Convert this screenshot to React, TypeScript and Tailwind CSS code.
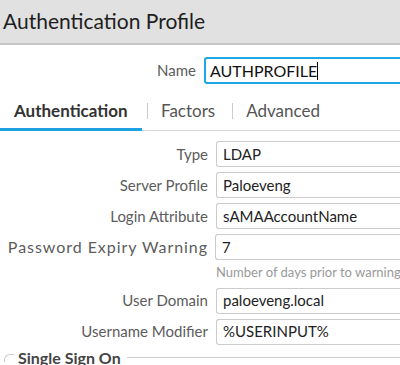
import React from "react";

const font = { fontFamily: "Lato, 'Noto Sans', sans-serif" };

function Row({
  label,
  value,
  mt = "mt-[5px]",
  wide = false,
}: {
  label: string;
  value: string;
  mt?: string;
  wide?: boolean;
}) {
  return (
    <div className={`flex items-center ${mt}`}>
      <div
        className={`w-[208px] shrink-0 whitespace-nowrap text-right text-[#5c5c5c] ${
          wide ? "text-[16px] tracking-[0.95px] mr-[-1px]" : "text-[15px]"
        }`}
      >
        {label}
      </div>
      <div className="ml-[8px] flex h-[26px] flex-1 items-center rounded-l-[3px] border border-r-0 border-[#cbcbcb] bg-white pl-[6px] text-[15px] text-[#222]">
        {value}
      </div>
    </div>
  );
}

export default function App() {
  return (
    <div style={font} className="h-[365px] w-[400px] overflow-hidden bg-white">
      <div className="flex h-[45px] items-center border-b-2 border-[#c6c6c6] bg-[#e1e1e1] pl-[3px] pb-[2px]">
        <span className="text-[21px] text-[#1e1e1e]">Authentication Profile</span>
      </div>
      <div className="mt-[12px] flex items-center">
        <div className="w-[196px] shrink-0 text-right text-[15px] text-[#5c5c5c]">Name</div>
        <div className="ml-[8px] flex h-[27px] flex-1 items-center rounded-l-[3px] border-2 border-r-0 border-[#1ea7e4] pl-[4px] text-[16px] text-[#111]">
          AUTHPROFILE<span className="inline-block h-[18px] w-[1px] bg-black" />
        </div>
      </div>
      <div className="mt-[10px] flex h-[37px] items-end border-b border-[#d9d9d9]">
        <div className="relative flex h-full w-[142px] items-center pb-[3px] pl-[14px] text-[17px] font-bold text-[#333]">
          Authentication
          <div className="absolute bottom-[-1px] left-0 h-[3px] w-[142px] bg-[#1da1e0]" />
        </div>
        <div className="flex h-full items-center pb-[3px] text-[17px] text-[#555]">
          <span className="ml-[5px] mr-[13px] h-[16px] w-[1px] bg-[#ccc]" />
          <span>Factors</span>
          <span className="ml-[17px] mr-[13px] h-[16px] w-[1px] bg-[#ccc]" />
          <span>Advanced</span>
        </div>
      </div>
      <div className="mt-[10px]">
        <Row label="Type" value="LDAP" mt="mt-0" />
        <Row label="Server Profile" value="Paloeveng" />
        <Row label="Login Attribute" value="sAMAAccountName" />
        <Row label="Password Expiry Warning" value="7" wide />
        <div className="ml-[216px] mt-[3px] whitespace-nowrap text-[13px] text-[#999]">Number of days prior to warning</div>
        <Row label="User Domain" value="paloeveng.local" mt="mt-[5px]" />
        <Row label="Username Modifier" value="%USERINPUT%" />
      </div>
      <div className="mt-[1px] flex items-center">
        <div className="ml-[4px] mt-[8px] h-[8px] w-[10px] shrink-0 self-start rounded-tl-[6px] border-l border-t border-[#ccc]" />
        <span className="ml-[4px] text-[16px] font-bold text-[#444]">Single Sign On</span>
        <div className="ml-[6px] h-[1px] flex-1 bg-[#ccc]" />
      </div>
    </div>
  );
}
